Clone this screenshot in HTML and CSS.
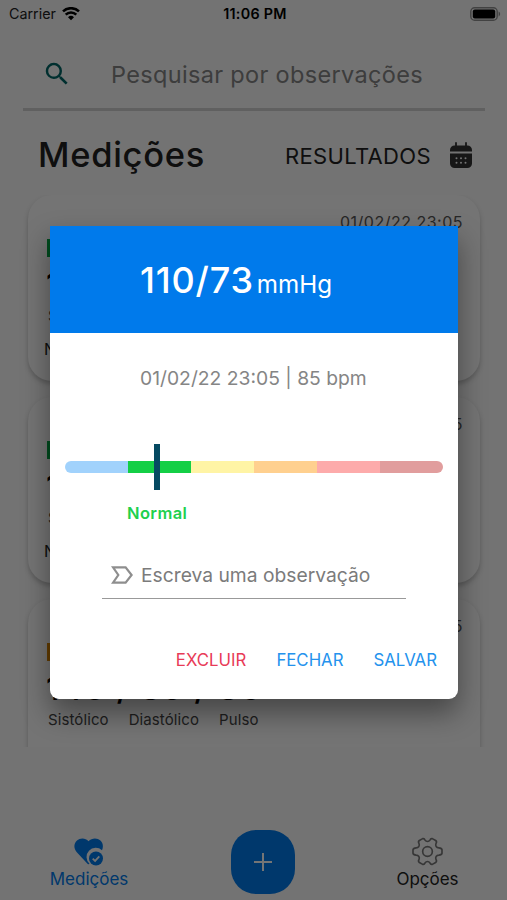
FILE: index.html
```html
<!doctype html>
<html lang="pt-BR">
<head>
	<meta charset="UTF-8">
	<title>Medições</title>
	<link rel="stylesheet" href="styles.css">
</head>
<body>
	<div class="app">
		<div class="status">
			<div class="carrier">
				<span>Carrier</span>
				<svg width="18" height="14" viewBox="0 0 18 14">
					<path d="M1 4.4a11.5 11.5 0 0 1 16 0M3.7 7.6a7.5 7.5 0 0 1 10.6 0" fill="none" stroke="#000" stroke-width="2.5"/>
					<path d="M6 10.2a4.3 4.3 0 0 1 6 0l-3 3z"/>
				</svg>
			</div>
			<span class="clock">11:06 PM</span>
			<svg class="battery" width="31" height="14" viewBox="0 0 31 14">
				<rect x=".8" y=".8" width="26.4" height="12.4" rx="3.8" fill="none" stroke="#909090" stroke-width="1.4"/>
				<rect x="2.8" y="2.6" width="22.4" height="8.8" rx="2"/>
				<path d="M28.6 4.6c2 .8 2 4 0 4.8z" fill="#909090"/>
			</svg>
		</div>

		<div class="search">
			<svg width="30" height="30" viewBox="0 0 24 24">
				<path fill="#006666" d="M15.5 14h-.79l-.28-.27A6.47 6.47 0 0 0 16 9.5 6.5 6.5 0 1 0 9.5 16c1.61 0 3.09-.59 4.23-1.57l.27.28v.79l5 4.99L20.49 19l-4.99-5zm-6 0C7.01 14 5 11.99 5 9.5S7.01 5 9.5 5 14 7.01 14 9.5 11.99 14 9.5 14z"/>
			</svg>
			<span class="search-text">Pesquisar por observações</span>
		</div>

		<div class="heading">
			<h1>Medições</h1>
			<span class="results">RESULTADOS</span>
			<svg width="24" height="27" viewBox="0 0 24 27">
				<path d="M7 1v5M17 1v5" stroke="#333" stroke-width="1.8" stroke-linecap="round"/>
				<path d="M1 9.6V8a4.6 4.6 0 0 1 4.6-4.6h12.8A4.6 4.6 0 0 1 23 8v1.6zM1 11.4h22v10a4.6 4.6 0 0 1-4.6 4.6H5.6A4.6 4.6 0 0 1 1 21.4z" fill="#333"/>
				<path d="M7.5 16.2h9.2M7.5 20.7h9.2" stroke="#fafafa" stroke-width="2" stroke-linecap="round" stroke-dasharray="0 4.5"/>
			</svg>
		</div>

		<div class="list">
			<div class="card">
				<div class="date">01/02/22 23:05</div>
				<div class="tag green"></div>
				<div class="values">110 / 73 / 85</div>
				<div class="labels"><span>Sistólico</span><span>Diastólico</span><span>Pulso</span></div>
				<div class="note">Normal</div>
			</div>
			<div class="card">
				<div class="date">01/02/22 23:05</div>
				<div class="tag green"></div>
				<div class="values">120 / 80 / 80</div>
				<div class="labels"><span>Sistólico</span><span>Diastólico</span><span>Pulso</span></div>
				<div class="note">Normal</div>
			</div>
			<div class="card">
				<div class="date">01/02/22 23:05</div>
				<div class="tag orange"></div>
				<div class="values">140 / 89 / 80</div>
				<div class="labels"><span>Sistólico</span><span>Diastólico</span><span>Pulso</span></div>
				<div class="note"></div>
			</div>
		</div>

		<div class="tabs">
			<div class="tab active">
				<svg width="30" height="28" viewBox="0 0 30 28">
					<path d="M14.5 3.2C11.5-.2 6-.2 3 2.6c-3.5 3.4-3.4 8-.2 11.6l10.7 11.5c.7.7 1.3.7 2 .1A9 9 0 0 1 28 12.3c1.6-3.8 1-7.2-1.6-9.7-3-2.8-8.5-2.8-11.9.6z"/>
					<circle cx="22" cy="20.5" r="7"/>
					<path d="M18.7 20.6l2.4 2.3 4.2-4.5" fill="none" stroke="#fafafa" stroke-width="1.8"/>
				</svg>
				<span>Medições</span>
			</div>
			<div class="add">
				<svg width="20" height="20" viewBox="0 0 20 20"><path d="M10 1v18M1 10h18" stroke="#fff" stroke-width="2"/></svg>
			</div>
			<div class="tab">
				<svg class="gear" width="31" height="29" viewBox="0 0 32 30">
					<path d="M13.5 3.2Q12.7 1.2 11 1.7L7.6 3.6Q6 4.8 7.2 6.7C8.2 9.1 6.8 11.2 4.2 11.3Q1.3 11.6 1 13.2V16.8Q1.3 18.4 4.2 18.7C6.8 18.8 8.2 20.9 7.2 23.3Q6 25.2 7.6 26.4L11 28.3Q12.7 28.8 13.5 26.8C14.7 24.9 17.3 24.9 18.5 26.8Q19.3 28.8 21 28.3L24.4 26.4Q26 25.2 24.8 23.3C23.8 20.9 25.2 18.8 27.8 18.7Q30.7 18.4 31 16.8V13.2Q30.7 11.6 27.8 11.3C25.2 11.2 23.8 9.1 24.8 6.7Q26 4.8 24.4 3.6L21 1.7Q19.3 1.2 18.5 3.2C17.3 5.1 14.7 5.1 13.5 3.2Z"/>
					<circle cx="16" cy="15" r="5"/>
				</svg>
				<span>Opções</span>
			</div>
		</div>
	</div>

	<div class="overlay">
		<div class="dialog">
			<div class="dialog-head">
				<span class="pressure">110/73</span>
				<span class="unit">mmHg</span>
			</div>
			<div class="dialog-body">
				<div class="info">01/02/22 23:05 | 85 bpm</div>
				<div class="scale">
					<div class="level low"></div>
					<div class="level normal"></div>
					<div class="level elevated"></div>
					<div class="level high1"></div>
					<div class="level high2"></div>
					<div class="level high3"></div>
					<div class="marker"></div>
				</div>
				<div class="level-name">Normal</div>
				<div class="field">
					<svg width="22" height="18" viewBox="0 0 22 18">
						<path d="M2 1.3h12.6L20.6 9l-6 7.7H2L7.3 9z" fill="none" stroke="#8e8e8e" stroke-width="2.2"/>
					</svg>
					<span>Escreva uma observação</span>
				</div>
				<div class="actions">
					<span class="delete">EXCLUIR</span>
					<span class="close">FECHAR</span>
					<span class="save">SALVAR</span>
				</div>
			</div>
		</div>
	</div>
</body>
</html>
```

FILE: styles.css
```css
*{
	box-sizing: border-box;
}
body{
	margin: 0;
	font-family: Inter, "Liberation Sans", sans-serif;
	color: #222;
	background: #fafafa;
}
svg{
	display: block;
	flex: none;
}
span, h1, .info, .date, .values{
	white-space: nowrap;
}
.app{
	height: 900px;
	display: flex;
	flex-direction: column;
	overflow: hidden;
}
.status{
	height: 27px;
	padding: 0 6px 0 9px;
	display: grid;
	grid-template-columns: 1fr auto 1fr;
	align-items: center;
	font-size: 14.3px;
}
.carrier{
	display: flex;
	align-items: center;
	gap: 6px;
}
.clock{
	font-weight: 600;
	letter-spacing: .3px;
	color: #000;
}
.battery{
	justify-self: end;
}
.search{
	height: 84px;
	margin: 0 22px 0 23px;
	padding: 13px 0 0 19px;
	display: flex;
	align-items: center;
	gap: 39px;
	border-bottom: 3px solid #d2d2d2;
}
.search-text{
	font-size: 23.5px;
	letter-spacing: .33px;
	color: #858585;
}
.heading{
	height: 84px;
	padding: 4px 34px 0 38px;
	display: flex;
	align-items: center;
}
.heading h1{
	margin: 0 auto 0 0;
	font-size: 34.5px;
	font-weight: 500;
	letter-spacing: .7px;
	line-height: 84px;
}
.results{
	margin-right: 18px;
	padding-top: 2px;
	font-size: 22px;
	letter-spacing: .35px;
}
.list{
	height: 552px;
	padding: 0 27px 0 28px;
	overflow: hidden;
}
.card{
	height: 186px;
	margin-bottom: 16px;
	padding: 18px 17px 0 19px;
	border-radius: 24px;
	background: #fcfcfc;
	box-shadow: 0 3px 5px rgba(0,0,0,.22);
}
.date{
	height: 26px;
	line-height: 19px;
	font-size: 16px;
	letter-spacing: .5px;
	text-align: right;
	color: #555;
}
.tag{
	width: 100px;
	height: 18px;
}
.green{
	background: #00a944;
}
.orange{
	background: #d98500;
}
.values{
	height: 49px;
	line-height: 54px;
	margin-left: -1px;
	font-size: 33px;
	font-weight: 500;
	letter-spacing: 1.3px;
	color: #000;
}
.labels{
	height: 34px;
	padding-left: 1px;
	display: flex;
	gap: 20px;
	line-height: 19px;
	font-size: 15px;
	letter-spacing: .1px;
	color: #444;
}
.note{
	font-size: 16px;
	line-height: 19px;
	margin-left: -3px;
}
.tabs{
	flex: 1;
	padding: 83px 48px 0 49px;
	display: grid;
	grid-template-columns: 80px 1fr 63px;
}
.tab{
	display: flex;
	flex-direction: column;
	align-items: center;
	gap: 3px;
	padding-top: 8px;
	font-size: 17px;
	line-height: 20px;
}
.active{
	color: #007aeb;
	fill: #007aeb;
}
.gear{
	margin: -1px 0 0;
	fill: none;
	stroke: #777;
	stroke-width: 1.7;
}
.add{
	justify-self: center;
	width: 64px;
	height: 64px;
	border-radius: 25px;
	background: #007aeb;
	display: flex;
	align-items: center;
	justify-content: center;
}
.overlay{
	position: absolute;
	top: 0;
	left: 0;
	width: 507px;
	height: 900px;
	padding: 226px 49px 0 50px;
	background: rgba(0,0,0,.54);
}
.dialog{
	height: 473px;
	border-radius: 0 0 9px 9px;
	background: #fff;
	box-shadow: 0 14px 28px rgba(0,0,0,.4);
}
.dialog-head{
	height: 107px;
	padding: 0 0 0 90px;
	display: flex;
	align-items: baseline;
	gap: 3px;
	line-height: 108px;
	color: #fff;
	background: #007aeb;
}
.pressure{
	font-size: 36px;
	font-weight: 500;
	letter-spacing: .8px;
}
.unit{
	font-size: 24.2px;
}
.dialog-body{
	padding: 0 15px;
}
.info{
	height: 128px;
	padding: 33px 0 0 75px;
	font-size: 19.3px;
	line-height: 24px;
	color: #858585;
}
.scale{
	position: relative;
	height: 12px;
	display: flex;
}
.level{
	flex: 1;
}
.low{
	border-radius: 6px 0 0 6px;
	background: #a1d2fc;
}
.normal{
	background: #14cf46;
}
.elevated{
	background: #fff4a5;
}
.high1{
	background: #ffd08f;
}
.high2{
	background: #fdabab;
}
.high3{
	border-radius: 0 6px 6px 0;
	background: #e19d9d;
}
.marker{
	position: absolute;
	left: 89px;
	top: -17px;
	width: 6px;
	height: 46px;
	background: #054a62;
}
.level-name{
	margin: 29px 0 0 62px;
	font-size: 16.5px;
	font-weight: 600;
	letter-spacing: .4px;
	line-height: 22px;
	color: #20d04d;
}
.field{
	width: 304px;
	height: 46px;
	margin: 29px 0 0 37px;
	padding: 0 0 1px 9px;
	display: flex;
	align-items: center;
	gap: 8px;
	border-bottom: 1px solid #999;
	font-size: 19.25px;
	color: #7b7b7b;
}
.actions{
	margin-top: 50px;
	padding-right: 6px;
	display: flex;
	justify-content: flex-end;
	gap: 30px;
	font-size: 16.8px;
	line-height: 22px;
	color: #2492ed;
}
.delete{
	color: #e83b57;
}
```
